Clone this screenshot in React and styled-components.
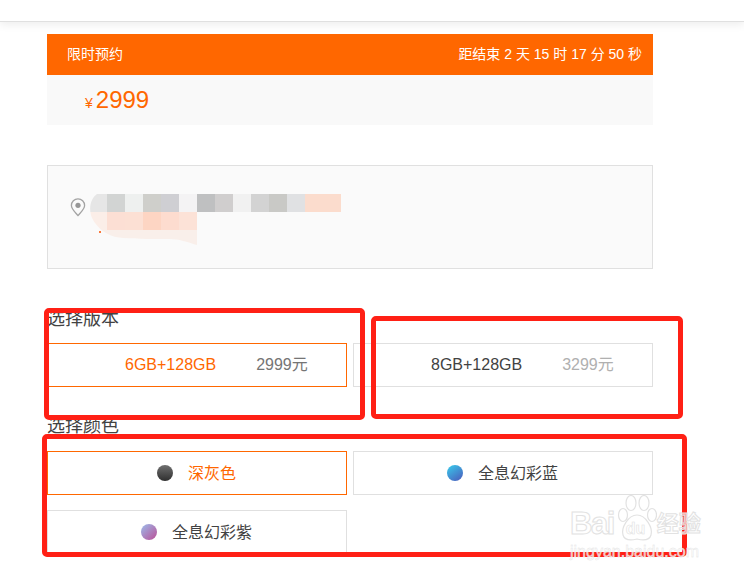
import React from "react";
import styled, { createGlobalStyle } from "styled-components";

const versions = [
  { name: "6GB+128GB", price: "2999元", active: true },
  { name: "8GB+128GB", price: "3299元" },
];

const colors = [
  { name: "深灰色", from: "#707070", to: "#2f2f2f", angle: 180, active: true },
  { name: "全息幻彩蓝", from: "#38cdec", to: "#4b58bb", angle: 145 },
  { name: "全息幻彩紫", from: "#9cbcec", to: "#bb4f96", angle: 135 },
];

const topRow = ["#e6e6e6", "#d2d4d3", "#eef0ef", "#cfcfcb", "#cfcfd3", "#f4f3f4", "#bfc0c1", "#d0cece", "#f1f1f1", "#d3d3d3", "#c9c9c6", "#e0e1e3", "#fbdccd", "#fbdccd"];
const midRow = ["#fbeee8", "#fcdfd4", "#fce0d4", "#fdd5c3", "#fddccf", "#fce2d7"];

const PinIcon = () => (
  <svg width="16" height="19" viewBox="0 0 16 19">
    <path d="M8 17.6C5 14 1.4 10.800 1.400 7.400a6.600 6.600 0 0 1 13.200 0C14.600 10.800 11 14 8 17.600Z" fill="none" stroke="#a3a3a3" strokeWidth="1.300" />
    <circle cx="8" cy="7.300" r="2.600" fill="#969696" />
  </svg>
);

// the blurred out address in the screenshot
const BlurredAddress = () => (
  <svg width="252" height="52" viewBox="0 0 252 52">
    <defs>
      <clipPath id="smudge">
        <path d="M8 0H252V18H108V51C98 48 90 45 80 45C60 45 40 45 30 43.500C18 42 8 34 3 24C-1 14 2 4 8 0Z" />
      </clipPath>
    </defs>
    <g clipPath="url(#smudge)">
      {topRow.map((c, i) => (
        <rect key={i} x={i * 18} y="0" width="18" height="18" fill={c} />
      ))}
      {midRow.map((c, i) => (
        <rect key={i} x={i * 18} y="18" width="18" height="18" fill={c} />
      ))}
      <rect x="0" y="36" width="108" height="16" fill="#f9efea" />
    </g>
    <rect x="10" y="37" width="2" height="2" fill="#fa7a3c" />
  </svg>
);

const PawIcon = () => (
  <svg width="40" height="48" viewBox="0 0 40 48">
    <g fill="#fff" fillOpacity="0.6" stroke="#e2e2e2" strokeWidth="1.200">
      <ellipse cx="6" cy="20" rx="4.500" ry="6.500" />
      <ellipse cx="14" cy="8" rx="5" ry="7.500" />
      <ellipse cx="27" cy="8" rx="5" ry="7.500" />
      <ellipse cx="35" cy="20" rx="4.500" ry="6.500" />
      <path d="M20 20C29 20 36 33 34 40C32 47 24 45 20 44C16 45 8 47 6 40C4 33 11 20 20 20Z" />
    </g>
  </svg>
);

export default function App() {
  return (
    <>
      <GlobalStyle />
      <Page>
        <TopBar />
        <Main>
          <Banner>
            <span>限时预约</span>
            <span>距结束 2 天 15 时 17 分 50 秒</span>
          </Banner>
          <PriceRow>
            <Yen>¥</Yen>
            <Amount>2999</Amount>
          </PriceRow>
          <AddressBox>
            <PinIcon />
            <BlurredAddress />
          </AddressBox>
          <VersionLabel>选择版本</VersionLabel>
          <OptionGrid>
            {versions.map((v) => (
              <VersionOption key={v.name} $active={v.active}>
                <VersionName $active={v.active}>{v.name}</VersionName>
                <VersionPrice $active={v.active}>{v.price}</VersionPrice>
              </VersionOption>
            ))}
          </OptionGrid>
          <ColorLabel>选择颜色</ColorLabel>
          <OptionGrid>
            {colors.map((c) => (
              <ColorOption key={c.name} $active={c.active}>
                <Dot $from={c.from} $to={c.to} $angle={c.angle} />
                <ColorName>{c.name}</ColorName>
              </ColorOption>
            ))}
          </OptionGrid>
        </Main>
        <MarkVersion />
        <MarkVersionOther />
        <MarkColor />
        <Watermark>
          <WatermarkTop>
            <WatermarkBrand>Bai</WatermarkBrand>
            <PawWrap>
              <PawIcon />
              <PawText>du</PawText>
            </PawWrap>
            <WatermarkCn>经验</WatermarkCn>
          </WatermarkTop>
          <WatermarkUrl>jingyan.baidu.com</WatermarkUrl>
        </Watermark>
      </Page>
    </>
  );
}

const GlobalStyle = createGlobalStyle`
  html, body {
    margin: 0;
    padding: 0;
    background: #fff;
    overflow: hidden;
  }
  * {
    box-sizing: border-box;
  }
`;

const Page = styled.div`
  position: relative;
  width: 744px;
  height: 577px;
  overflow: hidden;
  font-family: "Liberation Sans", "Noto Sans CJK SC", sans-serif;
  color: #333;
`;

const TopBar = styled.div`
  height: 22px;
  background: #fff;
  border-bottom: 1px solid #e0e0e0;
  box-shadow: 0 3px 8px rgba(0, 0, 0, 0.07);
`;

const Main = styled.div`
  width: 606px;
  margin: 12px 0 0 47px;
`;

const Banner = styled.div`
  height: 41px;
  padding: 0 11px 4px 20px;
  display: flex;
  align-items: center;
  justify-content: space-between;
  background: #ff6700;
  color: #fff;
  font-size: 14px;
`;

const PriceRow = styled.div`
  height: 50px;
  padding-left: 38px;
  display: flex;
  align-items: baseline;
  gap: 3px;
  background: #f9f9f9;
  color: #ff6700;
  line-height: 50px;
`;

const Yen = styled.span`
  font-size: 14px;
`;

const Amount = styled.span`
  font-size: 24px;
`;

const AddressBox = styled.div`
  height: 104px;
  margin-top: 40px;
  padding: 28px 0 0 22px;
  display: flex;
  align-items: flex-start;
  gap: 3px;
  background: #fafafa;
  border: 1px solid #e0e0e0;
  svg:first-child {
    margin-top: 4px;
  }
`;

const SectionLabel = styled.div`
  font-size: 18px;
  line-height: 24px;
  color: #424242;
`;

const VersionLabel = styled(SectionLabel)`
  margin: 38px 0 12px;
`;

const ColorLabel = styled(SectionLabel)`
  margin: 27px 0 13px;
`;

const OptionGrid = styled.div`
  display: grid;
  grid-template-columns: 300px 300px;
  column-gap: 6px;
  row-gap: 15px;
`;

const VersionOption = styled.div`
  height: 44px;
  padding-left: 77px;
  display: flex;
  align-items: baseline;
  gap: 40px;
  font-size: 16px;
  line-height: 42px;
  border: 1px solid ${(p) => (p.$active ? "#ff6700" : "#e0e0e0")};
`;

const VersionName = styled.span`
  color: ${(p) => (p.$active ? "#ff6700" : "#424242")};
`;

const VersionPrice = styled.span`
  color: ${(p) => (p.$active ? "#757575" : "#b0b0b0")};
`;

const ColorOption = styled.div`
  height: 44px;
  padding-right: 1px;
  display: flex;
  align-items: center;
  justify-content: center;
  font-size: 16px;
  color: ${(p) => (p.$active ? "#ff6700" : "#424242")};
  border: 1px solid ${(p) => (p.$active ? "#ff6700" : "#e0e0e0")};
`;

const ColorName = styled.span`
  margin-bottom: 2px;
`;

const Dot = styled.span`
  width: 16px;
  height: 16px;
  margin-right: 15px;
  border-radius: 50%;
  background: linear-gradient(${(p) => p.$angle}deg, ${(p) => p.$from}, ${(p) => p.$to});
`;

// red boxes somebody drew over the screenshot
const Mark = styled.div`
  position: absolute;
  border: 5px solid #ff2015;
  border-radius: 5px;
  pointer-events: none;
`;

const MarkVersion = styled(Mark)`
  left: 44px;
  top: 308px;
  width: 321px;
  height: 112px;
`;

const MarkVersionOther = styled(Mark)`
  left: 371px;
  top: 316px;
  width: 312px;
  height: 103px;
`;

const MarkColor = styled(Mark)`
  left: 42px;
  top: 434px;
  width: 645px;
  height: 123px;
`;

const Watermark = styled.div`
  position: absolute;
  left: 570px;
  top: 497px;
  width: 134px;
  color: rgba(255, 255, 255, 0.6);
  -webkit-text-stroke: 1px #e2e2e2;
`;

const WatermarkTop = styled.div`
  display: flex;
  align-items: flex-end;
  height: 46px;
`;

const WatermarkBrand = styled.span`
  font-size: 31px;
  font-weight: 700;
  line-height: 32px;
  letter-spacing: -1.5px;
  margin-bottom: 3px;
`;

const PawWrap = styled.span`
  position: relative;
  width: 40px;
  height: 48px;
  margin-left: 3px;
  display: block;
`;

const PawText = styled.span`
  position: absolute;
  left: 9px;
  bottom: 5px;
  font-size: 16px;
  font-weight: 700;
  line-height: 18px;
  -webkit-text-stroke: 0.6px #e2e2e2;
`;

const WatermarkCn = styled.span`
  font-size: 22px;
  line-height: 28px;
  font-weight: 700;
  margin-bottom: 5px;
`;

const WatermarkUrl = styled.div`
  font-size: 16px;
  line-height: 17px;
  white-space: nowrap;
  color: rgba(255, 255, 255, 0.75);
  -webkit-text-stroke: 0.4px #e2e2e2;
`;
